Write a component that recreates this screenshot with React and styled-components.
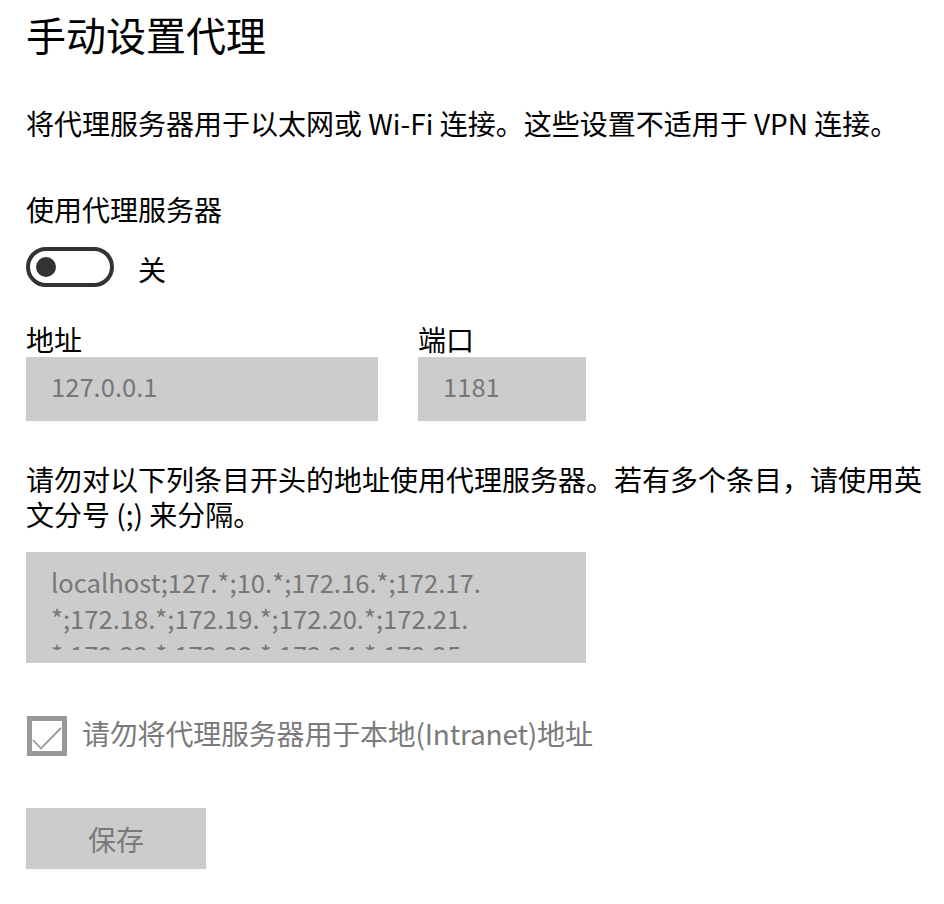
import React from 'react'
import styled, { createGlobalStyle } from 'styled-components'

const GlobalStyle = createGlobalStyle`
  body {
    margin: 0;
    background: #fff;
    font-family: "Noto Sans CJK SC", "Noto Sans", sans-serif;
    color: #000;
  }
`

const Page = styled.div`
  padding: 8px 14px 40px 26px;
`
const Title = styled.h1`
  margin: 0;
  font-size: 40px;
  line-height: 52px;
  font-weight: 400;
`
const Text = styled.p`
  margin: ${({ top }) => top}px 0 0;
  font-size: 28px;
  line-height: ${({ lh }) => lh || 36}px;
`
const ToggleRow = styled.div`
  margin-top: 20px;
  display: flex;
  align-items: center;
  gap: 24px;
`
const Toggle = styled.div`
  box-sizing: border-box;
  width: 88px;
  height: 40px;
  border: 4px solid #333;
  border-radius: 20px;
  display: flex;
  align-items: center;
  padding-left: 6px;
`
const Knob = styled.span`
  width: 20px;
  height: 20px;
  border-radius: 50%;
  background: #333;
`
const ToggleLabel = styled.span`
  font-size: 28px;
  line-height: 36px;
  padding-top: 4px;
`
const Fields = styled.div`
  margin-top: 34px;
  display: flex;
  gap: 40px;
`
const Field = styled.div`
  display: flex;
  flex-direction: column;
`
const FieldLabel = styled.label`
  font-size: 28px;
  line-height: 36px;
`
const Input = styled.div`
  box-sizing: border-box;
  width: ${({ w }) => w}px;
  height: 64px;
  background: #ccc;
  color: #777;
  font-size: 25.6px;
  line-height: 36px;
  padding: 11px 0 0 25px;
`
const TextArea = styled.div`
  box-sizing: border-box;
  margin-top: 20px;
  width: 560px;
  height: 111px;
  background: #ccc;
  padding: 12px 0 0 25px;
`
const TextClip = styled.div`
  width: 470px;
  height: 86px;
  overflow: hidden;
  color: #777;
  font-size: 25.6px;
  line-height: 36px;
  word-break: keep-all;
`
const CheckRow = styled.div`
  margin-top: 53px;
  display: flex;
  align-items: center;
  gap: 15px;
`
const CheckBox = styled.div`
  box-sizing: border-box;
  width: 40px;
  height: 40px;
  margin-left: 1px;
  border: 5px solid #999;
  display: flex;
  svg { display: block; }
`
const CheckLabel = styled.span`
  font-size: 28px;
  line-height: 34px;
  padding-bottom: 6px;
  color: #7a7a7a;
  letter-spacing: -0.2px;
`
const Button = styled.button`
  margin-top: 52px;
  width: 180px;
  height: 61px;
  border: none;
  background: #ccc;
  color: #7a7a7a;
  font-family: inherit;
  font-size: 28px;
  padding: 0;
`

const bypass = 'localhost;127.*;10.*;172.16.*;172.17.*;172.18.*;172.19.*;172.20.*;172.21.*;172.22.*;172.23.*;172.24.*;172.25.*;172.26.*;172.27.*;172.28.*;172.29.*;172.30.*;172.31.*;192.168.*'

export default function App () {
  const parts = bypass.split('*')
  return (
    <Page>
      <GlobalStyle />
      <Title>手动设置代理</Title>
      <Text top={45}>将代理服务器用于以太网或 Wi-Fi 连接。这些设置不适用于 VPN 连接。</Text>
      <Text top={50}>使用代理服务器</Text>
      <ToggleRow>
        <Toggle><Knob /></Toggle>
        <ToggleLabel>关</ToggleLabel>
      </ToggleRow>
      <Fields>
        <Field>
          <FieldLabel>地址</FieldLabel>
          <Input w={352}>127.0.0.1</Input>
        </Field>
        <Field>
          <FieldLabel>端口</FieldLabel>
          <Input w={168}>1181</Input>
        </Field>
      </Fields>
      <Text top={41} lh={35}>请勿对以下列条目开头的地址使用代理服务器。若有多个条目，请使用英文分号 (;) 来分隔。</Text>
      <TextArea>
        <TextClip>
          {parts.map((p, i) => (
            <React.Fragment key={i}>
              {i > 0 && <wbr />}
              {i > 0 ? '*' : ''}{p}
            </React.Fragment>
          ))}
        </TextClip>
      </TextArea>
      <CheckRow>
        <CheckBox>
          <svg width='30' height='30' viewBox='0 0 30 30'>
            <polyline points='1,19 9,27.5 29,7' fill='none' stroke='#999' strokeWidth='1.8' />
          </svg>
        </CheckBox>
        <CheckLabel>请勿将代理服务器用于本地(Intranet)地址</CheckLabel>
      </CheckRow>
      <Button disabled>保存</Button>
    </Page>
  )
}
